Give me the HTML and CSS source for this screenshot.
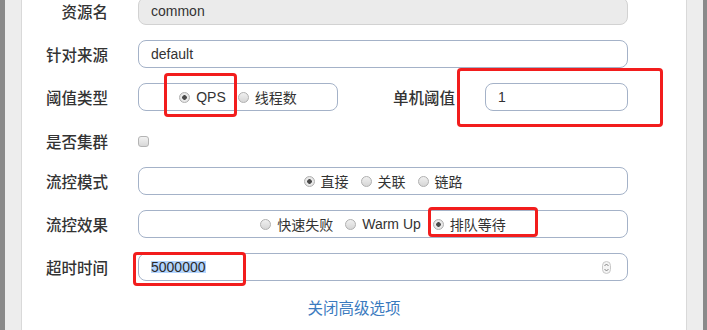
FILE: index.html
```html
<!DOCTYPE html>
<html lang="zh">
<head>
  <meta charset="UTF-8">
  <title>流控规则</title>
  <link rel="stylesheet" href="styles.css">
</head>
<body>

  <div class="shell">
    <!-- Левая кромка окна -->
    <div class="edge edge-left"></div>

    <div class="dialog">
      <form class="rule-form">
        <div class="form-row first-row">
          <label class="control-label">资源名</label>
          <input class="form-control" type="text" value="common" disabled>
        </div>

        <div class="form-row">
          <label class="control-label">针对来源</label>
          <input class="form-control" type="text" value="default">
        </div>

        <div class="form-row">
          <label class="control-label">阈值类型</label>
          <div class="field-split">
            <div class="radio-box small-box">
              <span class="radio-item"><span class="radio checked"></span>QPS</span>
              <span class="radio-item"><span class="radio"></span>线程数</span>
            </div>
            <label class="inline-label">单机阈值</label>
            <input class="form-control count-input" type="text" value="1">
          </div>
        </div>

        <div class="form-row check-row">
          <label class="control-label">是否集群</label>
          <div><span class="checkbox"></span></div>
        </div>

        <div class="form-row">
          <label class="control-label">流控模式</label>
          <div class="radio-box">
            <span class="radio-item"><span class="radio checked"></span>直接</span>
            <span class="radio-item"><span class="radio"></span>关联</span>
            <span class="radio-item"><span class="radio"></span>链路</span>
          </div>
        </div>

        <div class="form-row">
          <label class="control-label">流控效果</label>
          <div class="radio-box">
            <span class="radio-item"><span class="radio"></span>快速失败</span>
            <span class="radio-item"><span class="radio"></span>Warm Up</span>
            <span class="radio-item"><span class="radio checked"></span>排队等待</span>
          </div>
        </div>

        <div class="form-row">
          <label class="control-label">超时时间</label>
          <div class="form-control number-control">
            <span class="selected-text">5000000</span>
            <svg class="spinner" width="9" height="13" viewBox="0 0 9 13">
              <rect x="0.5" y="0.5" width="8" height="12" rx="4" fill="#f4f4f4" stroke="#c8c8c8"/>
              <path d="M2.5 5 L4.5 3 L6.5 5" fill="none" stroke="#777" stroke-width="0.9"/>
              <path d="M2.5 8 L4.5 10 L6.5 8" fill="none" stroke="#777" stroke-width="0.9"/>
            </svg>
          </div>
        </div>
      </form>

      <div class="advanced-link">
        <a href="#">关闭高级选项</a>
      </div>
    </div>

    <!-- Правая кромка окна -->
    <div class="edge edge-right"></div>
  </div>

  <!-- Красные пометки поверх скриншота -->
  <div class="mark mark-qps"></div>
  <div class="mark mark-count"></div>
  <div class="mark mark-queue"></div>
  <div class="mark mark-timeout"></div>

</body>
</html>
```

FILE: styles.css
```css
/* Обнуление отступов */
* {
  margin: 0;
  padding: 0;
  box-sizing: border-box;
}

body {
  font-family: "Liberation Sans", "Noto Sans CJK SC", sans-serif;
  color: #333;
  background: #fff;
  width: 707px;
  height: 330px;
  overflow: hidden;
  position: relative;
}

/* Каркас */
.shell {
  display: flex;
  height: 330px;
}

.edge {
  flex: none;
  background: #ededed;
}

.edge-left {
  width: 22px;
  border-left: 5px solid #8a8a8a;
  border-right: 1px solid #d9d9d9;
}

.edge-right {
  width: 21px;
  border-left: 1px solid #d9d9d9;
  border-right: 4px solid #8a8a8a;
}

.dialog {
  flex: 1;
  background: #fff;
  overflow: hidden;
}

/* Форма */
.rule-form {
  width: 606px;
}

.form-row {
  display: grid;
  grid-template-columns: 86px 490px;
  column-gap: 30px;
  align-items: center;
  height: 28px;
  margin-bottom: 15px;
}

.first-row {
  margin-top: -3px;
}

.check-row {
  height: 30px;
  margin-bottom: 11px;
}

.control-label {
  font-family: "Noto Sans CJK SC", sans-serif;
  font-size: 15.5px;
  font-weight: 500;
  color: #333;
  text-align: right;
  white-space: nowrap;
}

.form-control {
  height: 28px;
  width: 100%;
  border: 1px solid #a4b2c8;
  border-radius: 8px;
  padding: 0 12px;
  font-family: "Liberation Sans", sans-serif;
  font-size: 14px;
  color: #333;
  background: #fff;
  outline: none;
}

.form-control:disabled {
  background: #ebebeb;
  border-color: #d2d2d2;
  color: #333;
}

/* Строка с порогом */
.field-split {
  display: flex;
  align-items: center;
}

.small-box {
  width: 200px;
  flex: none;
}

.inline-label {
  flex: 1;
  text-align: right;
  padding-right: 30px;
  font-family: "Noto Sans CJK SC", sans-serif;
  font-size: 15.5px;
  font-weight: 500;
  color: #333;
}

.count-input {
  width: 143px;
  flex: none;
}

/* Группа радиокнопок */
.radio-box {
  height: 28px;
  border: 1px solid #a4b2c8;
  border-radius: 8px;
  display: flex;
  justify-content: center;
  align-items: center;
  gap: 12px;
  font-family: "Liberation Sans", "Noto Sans CJK SC", sans-serif;
  font-size: 14px;
  color: #333;
}

.radio-item {
  display: flex;
  align-items: center;
  gap: 6px;
  white-space: nowrap;
}

.radio {
  width: 11px;
  height: 11px;
  border-radius: 50%;
  border: 1px solid #b0b0b0;
  background: linear-gradient(#f0f0f0, #d6d6d6);
}

.radio.checked {
  background: radial-gradient(circle, #4a4a4a 0 2px, #ececec 2.6px, #dcdcdc 100%);
}

/* Чекбокс */
.checkbox {
  display: block;
  width: 11px;
  height: 11px;
  margin-top: 1px;
  border: 1px solid #b4b4b4;
  border-radius: 3px;
  background: linear-gradient(#f2f2f2, #d8d8d8);
}

/* Числовое поле */
.number-control {
  display: flex;
  align-items: center;
  justify-content: space-between;
  padding-right: 16px;
}

.selected-text {
  background: #b4d5fe;
  line-height: 12px;
  color: #2a2a2a;
}

.spinner {
  display: block;
}

/* Ссылка */
.advanced-link {
  margin-top: 14px;
  text-align: center;
  line-height: 22px;
}

.advanced-link a {
  font-family: "Noto Sans CJK SC", sans-serif;
  font-size: 15.5px;
  color: #3b7bbf;
  text-decoration: none;
}

/* Пометки */
.mark {
  position: absolute;
  border: 3px solid #f21d1d;
  border-radius: 4px;
}

.mark-qps {
  left: 164px;
  top: 73px;
  width: 73px;
  height: 44px;
}

.mark-count {
  left: 457px;
  top: 68px;
  width: 206px;
  height: 59px;
}

.mark-queue {
  left: 428px;
  top: 207px;
  width: 110px;
  height: 30px;
}

.mark-timeout {
  left: 133px;
  top: 252px;
  width: 113px;
  height: 34px;
}
```
